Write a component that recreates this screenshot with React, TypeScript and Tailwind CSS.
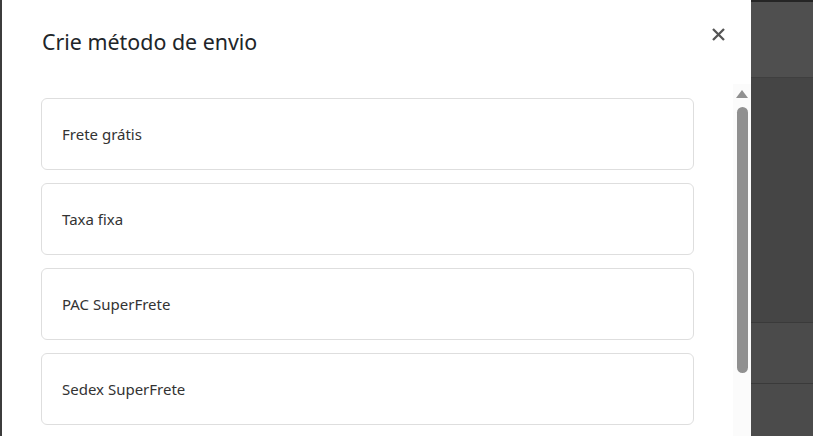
import React from "react";

const items = ["Frete grátis", "Taxa fixa", "PAC SuperFrete", "Sedex SuperFrete"];

export default function App() {
  return (
    <div
      className="flex h-[436px] w-[813px] overflow-hidden bg-[#4b4b4b]"
      style={{ fontFamily: '"Noto Sans", "Open Sans", sans-serif' }}
    >
      <div className="flex w-[2px] flex-col bg-[#3c3c3c]" />
      <div className="flex w-[749px] shrink-0 flex-col bg-white">
        <div className="flex h-[84px] items-start justify-between pl-[40px] pr-[26px] pt-[27px]">
          <h2 className="text-[21.4px] leading-[30px] text-[#212529]">Crie método de envio</h2>
          <button className="flex h-[14px] w-[14px] items-center justify-center text-[#555]">
            <svg width="13" height="13" viewBox="0 0 13 13">
              <path d="M1 1L12 12M12 1L1 12" stroke="#555" strokeWidth="2.3" strokeLinecap="butt" />
            </svg>
          </button>
        </div>
        <div className="flex flex-1">
          <div className="flex flex-1 flex-col gap-[13px] pl-[39px] pr-[39px] pt-[14px]">
            {items.map((t) => (
              <div
                key={t}
                className="flex h-[72px] shrink-0 items-center rounded-[6px] border border-[#dedede] pl-[20px] text-[15px] text-[#333]"
              >
                {t}
              </div>
            ))}
          </div>
          <div className="flex w-[18px] flex-col items-center bg-[#fbfbfb] pt-[6px]">
            <div className="h-0 w-0 border-x-[6px] border-b-[8px] border-x-transparent border-b-[#909090]" />
            <div className="mt-[9px] h-[266px] w-[11px] rounded-full bg-[#909090]" />
          </div>
        </div>
      </div>
      <div className="flex flex-1 flex-col">
        <div className="h-[2px] bg-[#252525]" />
        <div className="h-[75px] bg-[#4f4f4f]" />
        <div className="h-[245px] bg-[#454545] border-t border-[#3f3f3f]" />
        <div className="h-[61px] border-t border-[#3a3a3a] bg-[#4b4b4b]" />
        <div className="flex-1 border-t border-[#3a3a3a] bg-[#4b4b4b]" />
      </div>
    </div>
  );
}
